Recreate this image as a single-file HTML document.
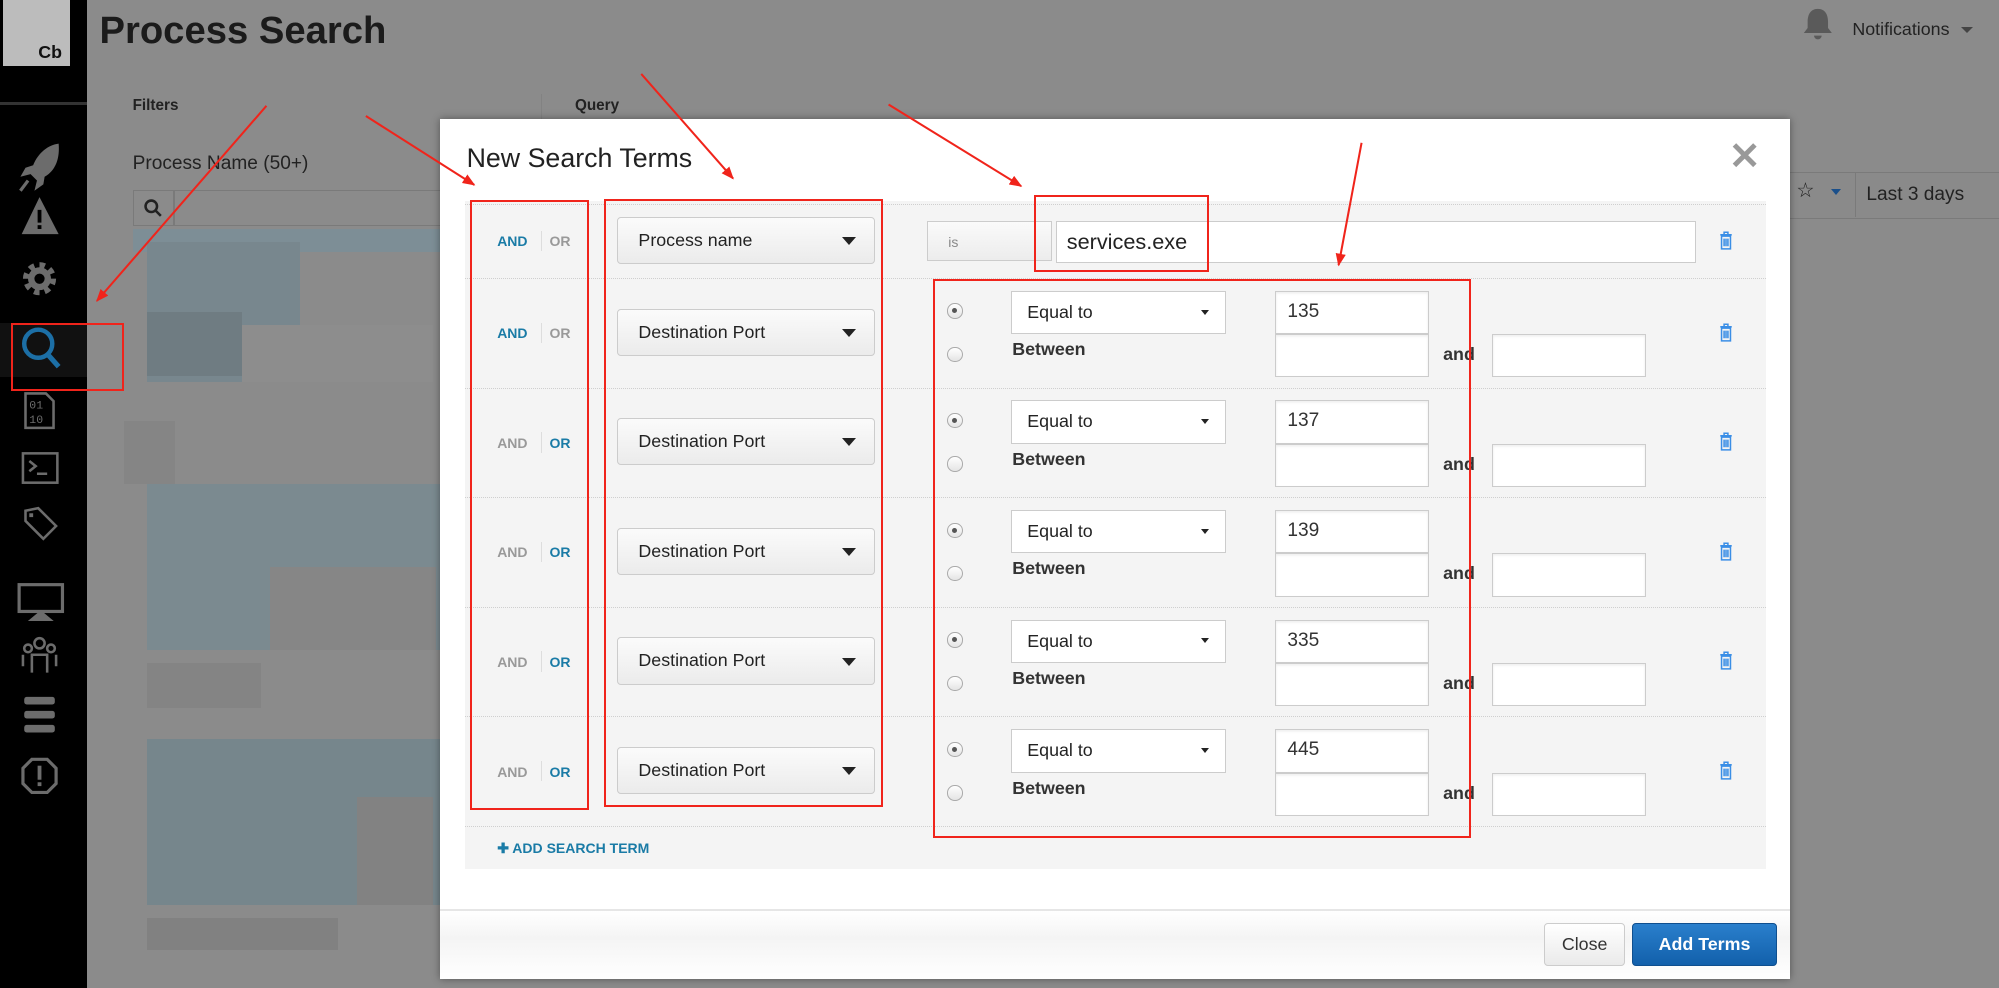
<!DOCTYPE html>
<html><head><meta charset="utf-8">
<style>
html,body{margin:0;padding:0;}
body{width:1568px;height:775px;overflow:hidden;zoom:1.27487;background:#8b8b8b;font-family:"Liberation Sans",sans-serif;position:relative;}
.a{position:absolute;}
.sb{left:0;top:0;width:68px;height:775px;background:#000;}
.blk{position:absolute;}
.modal{left:345px;top:93px;width:1059px;height:675px;background:#fff;box-shadow:0 0 6px rgba(0,0,0,.4);}
.panel{left:365px;top:158px;width:1020px;height:524px;background:#f4f4f4;}
.dl{position:absolute;left:365px;width:1020px;height:0;border-top:1px dotted #cfcfcf;}
.ao{position:absolute;font-size:11px;font-weight:bold;}
.and{left:390px;}
.or{left:431px;}
.vs{position:absolute;left:424px;width:1px;height:16px;background:#ddd;}
.bl{color:#1a7ba6;}.gr{color:#999;}
.dd{position:absolute;left:484px;width:202px;height:37px;border:1px solid #ccc;border-radius:3px;background:linear-gradient(#fbfbfb,#ebebeb);box-sizing:border-box;font-size:14px;color:#222;line-height:36px;padding-left:16px;}
.dd:after{content:"";position:absolute;right:14px;top:15px;border-left:6px solid transparent;border-right:6px solid transparent;border-top:7px solid #222;}
.sel{position:absolute;left:793px;width:169px;height:34px;border:1px solid #ccc;background:#fff;box-sizing:border-box;font-size:14px;color:#222;line-height:32px;padding-left:12px;}
.sel:after{content:"";position:absolute;right:13px;top:14px;border-left:3.5px solid transparent;border-right:3.5px solid transparent;border-top:4px solid #222;}
.inp{position:absolute;width:121px;height:34px;border:1px solid #ccc;background:#fff;box-sizing:border-box;font-size:15px;color:#333;line-height:32px;padding-left:9px;box-shadow:inset 0 1px 2px rgba(0,0,0,.08);}
.rad{position:absolute;left:743px;width:12px;height:12px;border:1px solid #aaa;border-radius:50%;background:linear-gradient(#fff,#e4e4e4);box-sizing:border-box;}
.rad.on:after{content:"";position:absolute;left:3px;top:3px;width:4px;height:4px;border-radius:50%;background:#555;}
.btw{position:absolute;left:794px;font-size:14px;color:#333;font-weight:bold;}
.andt{position:absolute;left:1132px;font-size:14px;color:#333;font-weight:bold;}
.tr{position:absolute;left:1348px;}
.rb{position:absolute;border:2px solid #f0241b;box-sizing:border-box;}
</style></head><body>
<div class="a sb"></div>
<div class="a" style="left:2px;top:0;width:53px;height:52px;background:#bcbcbc;"></div>
<div class="a" style="left:30px;top:33px;font-size:14px;font-weight:bold;color:#111;">Cb</div>
<div class="a" style="left:0;top:80px;width:68px;height:2px;background:#333;"></div>
<div class="a" style="left:0;top:253px;width:68px;height:43px;background:#111;"></div>
<svg class="a" style="left:0;top:100px" width="68" height="540" viewBox="0 100 68 540" fill="none" stroke="#6c6c6c" stroke-width="3">
 <path d="M46 113 C38 114 30 120 26 130 L20 132 L16 139 L24 137 L29 142 L27 150 L34 145 L35 139 C44 134 47 124 46 113Z" fill="#6c6c6c" stroke="none"/>
 <path d="M22 142 L16 150" stroke-width="2.5"/>
 <path d="M31 155 L17 184 H46 Z" fill="#6c6c6c" stroke="none"/>
 <rect x="29.5" y="165" width="3" height="10" fill="#000" stroke="none"/><rect x="29.5" y="177" width="3" height="3" fill="#000" stroke="none"/>
 <circle cx="31" cy="219" r="10" stroke-width="6" stroke-dasharray="4 3.8"/><circle cx="31" cy="219" r="9" fill="#6c6c6c" stroke="none"/><circle cx="31" cy="219" r="4" fill="#000" stroke="none"/>
 <circle cx="30" cy="270" r="11" stroke="#1c6fa6" stroke-width="3.5"/><path d="M38 279 L46 288" stroke="#1c6fa6" stroke-width="4"/>
 <path d="M20 309 H36 L42 315 V336 H20 Z" stroke-width="2"/><text x="23" y="321" font-size="9" fill="#6c6c6c" stroke="none" font-family="Liberation Mono">01</text><text x="23" y="332" font-size="9" fill="#6c6c6c" stroke="none" font-family="Liberation Mono">10</text>
 <rect x="18" y="356" width="27" height="23" stroke-width="2"/><path d="M23 362 l5 4 -5 4 M29 372 h8" stroke-width="2"/>
 <path d="M20 401 L30 399 L44 413 L34 423 L20 409 Z" stroke-width="2"/><rect x="23" y="403" width="3" height="3" fill="#6c6c6c" stroke="none"/>
 <rect x="15" y="459" width="34" height="21" stroke-width="2.5"/><path d="M26 486 h12 l-6 -5 z" fill="#6c6c6c"/>
 <circle cx="31" cy="505" r="4" stroke-width="2"/><circle cx="22" cy="509" r="3" stroke-width="2"/><circle cx="40" cy="509" r="3" stroke-width="2"/><path d="M25 528 V514 h12 V528 M18 523 v-9 M44 523 v-9" stroke-width="2"/>
 <rect x="19" y="547" width="24" height="6" rx="2" fill="#6c6c6c" stroke="none"/><rect x="19" y="558" width="24" height="6" rx="2" fill="#6c6c6c" stroke="none"/><rect x="19" y="569" width="24" height="6" rx="2" fill="#6c6c6c" stroke="none"/>
 <path d="M25 596 h12 l7 7 v12 l-7 7 h-12 l-7 -7 v-12 z" stroke-width="2.5"/><rect x="29.5" y="601" width="3" height="11" fill="#6c6c6c" stroke="none"/><rect x="29.5" y="614" width="3" height="3" fill="#6c6c6c" stroke="none"/>
</svg>
<div class="a" style="left:78px;top:7px;font-size:30px;font-weight:bold;color:#1b1b1b;">Process Search</div>
<svg class="a" style="left:1412px;top:4px" width="28" height="28" viewBox="0 0 28 28"><path d="M14 3 c-6 0 -8 5 -8 10 v5 l-3 4 h22 l-3 -4 v-5 c0 -5 -2 -10 -8 -10z M11 24 a3 3 0 0 0 6 0z" fill="#5a5a5a"/></svg>
<div class="a" style="left:1453px;top:15px;font-size:14px;color:#222;">Notifications</div>
<div class="a" style="left:1538px;top:21px;border-left:5px solid transparent;border-right:5px solid transparent;border-top:5px solid #444;"></div>
<div class="a" style="left:104px;top:76px;font-size:12px;font-weight:bold;color:#222;">Filters</div>
<div class="a" style="left:451px;top:76px;font-size:12px;font-weight:bold;color:#222;">Query</div>
<div class="a" style="left:424px;top:74px;width:1px;height:30px;background:#828282;"></div>
<div class="a" style="left:104px;top:120px;font-size:15px;color:#222;">Process Name (50+)</div>
<div class="a" style="left:104px;top:149px;width:250px;height:28px;border:1px solid #7a7a7a;box-sizing:border-box;"></div>
<div class="a" style="left:136px;top:149px;width:1px;height:28px;background:#7a7a7a;"></div>
<svg class="a" style="left:112px;top:155px" width="16" height="16"><circle cx="6.5" cy="6.5" r="4.5" stroke="#222" stroke-width="2" fill="none"/><path d="M10 10 l4 4" stroke="#222" stroke-width="2"/></svg>
<div class="a" style="left:104px;top:180px;width:245px;height:18px;background:#7d8e96;"></div>
<div class="blk" style="left:115px;top:190px;width:120px;height:110px;background:#78878e;"></div>
<div class="blk" style="left:115px;top:245px;width:75px;height:50px;background:#6f7c82;"></div>
<div class="blk" style="left:190px;top:255px;width:150px;height:45px;background:#8d8d8d;"></div>
<div class="blk" style="left:97px;top:330px;width:40px;height:50px;background:#858585;"></div>
<div class="blk" style="left:115px;top:380px;width:230px;height:130px;background:#7b8a90;"></div>
<div class="blk" style="left:212px;top:445px;width:130px;height:65px;background:#868686;"></div>
<div class="blk" style="left:115px;top:520px;width:90px;height:35px;background:#848484;"></div>
<div class="blk" style="left:115px;top:580px;width:230px;height:130px;background:#76868c;"></div>
<div class="blk" style="left:280px;top:625px;width:60px;height:85px;background:#828282;"></div>
<div class="blk" style="left:115px;top:720px;width:150px;height:25px;background:#818181;"></div>
<div class="a" style="left:1385px;top:135px;width:183px;height:35px;background:#8a8a8a;border-top:1px solid #7a7a7a;border-bottom:1px solid #7a7a7a;"></div>
<div class="a" style="left:1455px;top:135px;width:1px;height:35px;background:#7a7a7a;"></div>
<div class="a" style="left:1409px;top:140px;font-size:16px;color:#222;">☆</div>
<div class="a" style="left:1436px;top:148px;border-left:4px solid transparent;border-right:4px solid transparent;border-top:5px solid #1a4f8a;"></div>
<div class="a" style="left:1464px;top:144px;font-size:15px;color:#222;">Last 3 days</div>
<div class="a modal"></div>
<div class="a" style="left:366px;top:112px;font-size:21px;color:#222;">New Search Terms</div>
<div class="a" style="left:1356px;top:106px;font-size:30px;font-weight:bold;color:#999;">✕</div>
<div class="a panel"></div>
<div class="dl" style="top:160px"></div><div class="dl" style="top:218px"></div><div class="dl" style="top:304px"></div><div class="dl" style="top:390px"></div><div class="dl" style="top:476px"></div><div class="dl" style="top:562px"></div><div class="dl" style="top:648px"></div>
<div class="ao and bl" style="top:183px">AND</div><div class="vs" style="top:181px"></div><div class="ao or gr" style="top:183px">OR</div>
<div class="dd" style="top:170px">Process name</div>
<div class="a" style="left:727px;top:173px;width:98px;height:32px;border:1px solid #ccc;background:linear-gradient(#fafafa,#ececec);box-sizing:border-box;font-size:11px;color:#888;line-height:32px;padding-left:16px;">is</div>
<div class="a" style="left:828px;top:173px;width:502px;height:33px;border:1px solid #ccc;background:#fff;box-sizing:border-box;font-size:17px;color:#222;line-height:31px;padding-left:8px;">services.exe</div>
<svg class="tr" style="top:181px" width="11" height="16" viewBox="0 0 11 16"><path d="M1 3 h9 M4 3 v-2 h3 v2 M2 4 v10 h7 v-10 z M4 6 v6 M5.5 6 v6 M7 6 v6" stroke="#3a8ee6" stroke-width="1.2" fill="none"/></svg>
<div class="ao and bl" style="top:255px">AND</div><div class="vs" style="top:253px"></div><div class="ao or gr" style="top:255px">OR</div>
<div class="ao and gr" style="top:341px">AND</div><div class="vs" style="top:339px"></div><div class="ao or bl" style="top:341px">OR</div>
<div class="ao and gr" style="top:427px">AND</div><div class="vs" style="top:425px"></div><div class="ao or bl" style="top:427px">OR</div>
<div class="ao and gr" style="top:513px">AND</div><div class="vs" style="top:511px"></div><div class="ao or bl" style="top:513px">OR</div>
<div class="ao and gr" style="top:599px">AND</div><div class="vs" style="top:597px"></div><div class="ao or bl" style="top:599px">OR</div>
<div class="dd" style="top:242px">Destination Port</div>
<div class="dd" style="top:328px">Destination Port</div>
<div class="dd" style="top:414px">Destination Port</div>
<div class="dd" style="top:500px">Destination Port</div>
<div class="dd" style="top:586px">Destination Port</div>
<div class="rad on" style="top:238px"></div><div class="rad" style="top:272px"></div>
<div class="sel" style="top:228px">Equal to</div><div class="btw" style="top:266px">Between</div>
<div class="inp" style="left:1000px;top:228px">135</div><div class="inp" style="left:1000px;top:262px"></div>
<div class="andt" style="top:270px">and</div><div class="inp" style="left:1170px;top:262px"></div>
<svg class="tr" style="top:253px" width="11" height="16" viewBox="0 0 11 16"><path d="M1 3 h9 M4 3 v-2 h3 v2 M2 4 v10 h7 v-10 z M4 6 v6 M5.5 6 v6 M7 6 v6" stroke="#3a8ee6" stroke-width="1.2" fill="none"/></svg>
<div class="rad on" style="top:324px"></div><div class="rad" style="top:358px"></div>
<div class="sel" style="top:314px">Equal to</div><div class="btw" style="top:352px">Between</div>
<div class="inp" style="left:1000px;top:314px">137</div><div class="inp" style="left:1000px;top:348px"></div>
<div class="andt" style="top:356px">and</div><div class="inp" style="left:1170px;top:348px"></div>
<svg class="tr" style="top:339px" width="11" height="16" viewBox="0 0 11 16"><path d="M1 3 h9 M4 3 v-2 h3 v2 M2 4 v10 h7 v-10 z M4 6 v6 M5.5 6 v6 M7 6 v6" stroke="#3a8ee6" stroke-width="1.2" fill="none"/></svg>
<div class="rad on" style="top:410px"></div><div class="rad" style="top:444px"></div>
<div class="sel" style="top:400px">Equal to</div><div class="btw" style="top:438px">Between</div>
<div class="inp" style="left:1000px;top:400px">139</div><div class="inp" style="left:1000px;top:434px"></div>
<div class="andt" style="top:442px">and</div><div class="inp" style="left:1170px;top:434px"></div>
<svg class="tr" style="top:425px" width="11" height="16" viewBox="0 0 11 16"><path d="M1 3 h9 M4 3 v-2 h3 v2 M2 4 v10 h7 v-10 z M4 6 v6 M5.5 6 v6 M7 6 v6" stroke="#3a8ee6" stroke-width="1.2" fill="none"/></svg>
<div class="rad on" style="top:496px"></div><div class="rad" style="top:530px"></div>
<div class="sel" style="top:486px">Equal to</div><div class="btw" style="top:524px">Between</div>
<div class="inp" style="left:1000px;top:486px">335</div><div class="inp" style="left:1000px;top:520px"></div>
<div class="andt" style="top:528px">and</div><div class="inp" style="left:1170px;top:520px"></div>
<svg class="tr" style="top:511px" width="11" height="16" viewBox="0 0 11 16"><path d="M1 3 h9 M4 3 v-2 h3 v2 M2 4 v10 h7 v-10 z M4 6 v6 M5.5 6 v6 M7 6 v6" stroke="#3a8ee6" stroke-width="1.2" fill="none"/></svg>
<div class="rad on" style="top:582px"></div><div class="rad" style="top:616px"></div>
<div class="sel" style="top:572px">Equal to</div><div class="btw" style="top:610px">Between</div>
<div class="inp" style="left:1000px;top:572px">445</div><div class="inp" style="left:1000px;top:606px"></div>
<div class="andt" style="top:614px">and</div><div class="inp" style="left:1170px;top:606px"></div>
<svg class="tr" style="top:597px" width="11" height="16" viewBox="0 0 11 16"><path d="M1 3 h9 M4 3 v-2 h3 v2 M2 4 v10 h7 v-10 z M4 6 v6 M5.5 6 v6 M7 6 v6" stroke="#3a8ee6" stroke-width="1.2" fill="none"/></svg>
<div class="a" style="left:390px;top:659px;font-size:11px;font-weight:bold;color:#1a7ba6;">✚ ADD SEARCH TERM</div>
<div class="a" style="left:345px;top:713px;width:1059px;height:55px;border-top:2px solid #e6e6e6;background:linear-gradient(#fff,#f4f4f4 40%,#fff);box-sizing:border-box;"></div>
<div class="a" style="left:1211px;top:724px;width:64px;height:34px;border:1px solid #ccc;border-radius:3px;background:linear-gradient(#fff,#eaeaea);box-sizing:border-box;font-size:14px;color:#333;text-align:center;line-height:32px;">Close</div>
<div class="a" style="left:1280px;top:724px;width:114px;height:34px;border:1px solid #0f4f8f;border-radius:3px;background:linear-gradient(#2a7fcc,#1260ab);box-sizing:border-box;font-size:14px;font-weight:bold;color:#fff;text-align:center;line-height:32px;">Add Terms</div>
<div class="rb" style="left:9px;top:253px;width:88px;height:54px;"></div>
<div class="rb" style="left:369px;top:157px;width:93px;height:478px;"></div>
<div class="rb" style="left:474px;top:156px;width:219px;height:477px;"></div>
<div class="rb" style="left:811px;top:153px;width:137px;height:60px;"></div>
<div class="rb" style="left:732px;top:219px;width:422px;height:438px;"></div>
<svg class="a" style="left:0;top:0" width="1568" height="775">
 <defs><marker id="ah" markerWidth="10" markerHeight="8" refX="9" refY="4" orient="auto" markerUnits="userSpaceOnUse"><path d="M0 0 L10 4 L0 8 Z" fill="#f0241b"/></marker></defs>
 <g stroke="#f0241b" stroke-width="1.6" marker-end="url(#ah)">
 <line x1="209" y1="83" x2="76" y2="236"/>
 <line x1="287" y1="91" x2="372" y2="145"/>
 <line x1="503" y1="58" x2="575" y2="140"/>
 <line x1="697" y1="82" x2="801" y2="146"/>
 <line x1="1068" y1="112" x2="1050" y2="208"/>
 </g>
</svg>
</body></html>
